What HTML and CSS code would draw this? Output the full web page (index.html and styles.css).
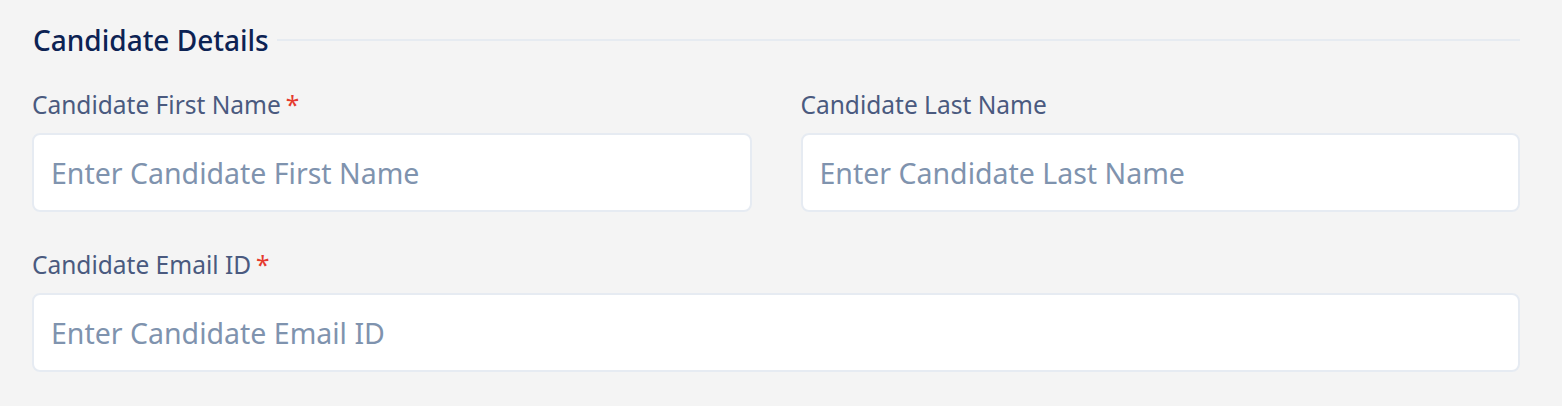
FILE: index.html
```html
<!DOCTYPE html>
<html lang="en">
<head>
<meta charset="utf-8">
<title>Candidate Details</title>
<link rel="stylesheet" href="styles.css">
</head>
<body>
<section class="card">
  <div class="section-head">
    <h2 class="section-title">Candidate Details</h2>
    <div class="section-rule"></div>
  </div>
  <div class="row two">
    <div class="field">
      <label class="label">Candidate First Name<span class="req">*</span></label>
      <input class="input" type="text" placeholder="Enter Candidate First Name">
    </div>
    <div class="field">
      <label class="label">Candidate Last Name</label>
      <input class="input" type="text" placeholder="Enter Candidate Last Name">
    </div>
  </div>
  <div class="row">
    <div class="field">
      <label class="label">Candidate Email ID<span class="req">*</span></label>
      <input class="input" type="text" placeholder="Enter Candidate Email ID">
    </div>
  </div>
</section>
</body>
</html>
```
FILE: styles.css
```css
html, body {
  margin: 0;
  padding: 0;
  background: #f4f4f4;
  font-family: "Noto Sans", "Open Sans", sans-serif;
}
.card {
  padding: 20px 42px 0 32px;
  display: flex;
  flex-direction: column;
}
.section-head {
  display: flex;
  align-items: center;
  gap: 8px;
  height: 40px;
}
.section-title {
  margin: 0 0 0 1px;
  font-size: 28px;
  font-weight: 500;
  color: #0c2253;
  line-height: 40px;
  white-space: nowrap;
}
.section-rule {
  flex: 1;
  height: 2px;
  background: #e6ebf1;
  margin-top: -1px;
}
.row {
  display: grid;
  grid-template-columns: 1fr;
}
.row.two {
  grid-template-columns: 1fr 1fr;
  column-gap: 49px;
  margin-top: 29px;
}
.row + .row {
  margin-top: 37px;
}
.field {
  display: flex;
  flex-direction: column;
  gap: 12px;
}
.label {
  font-size: 24.5px;
  line-height: 32px;
  color: #4a5a7f;
  font-weight: 400;
  padding-left: 0;
}
.req {
  color: #e53a2e;
  margin-left: 5px;
}
.input {
  box-sizing: border-box;
  height: 79px;
  border: 2px solid #e6ebf2;
  border-radius: 8px;
  background: #fff;
  padding: 0 17px;
  font-family: inherit;
  font-size: 28.5px;
  color: #0c2253;
  outline: none;
}
.input::placeholder {
  color: #7f93ae;
  opacity: 1;
}
```
